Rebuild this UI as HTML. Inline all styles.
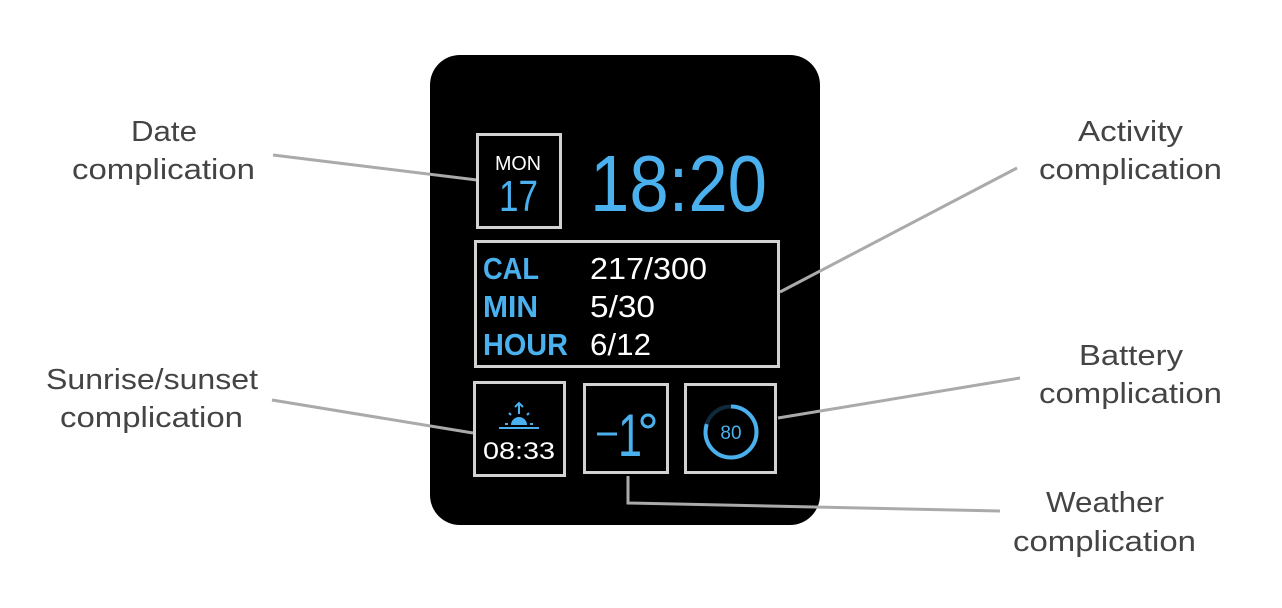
<!DOCTYPE html>
<html><head><meta charset="utf-8"><style>
html,body{margin:0;padding:0;background:#fff;width:1282px;height:608px;overflow:hidden}
svg{display:block}
text{font-family:"Liberation Sans",sans-serif}
</style></head><body>
<svg width="1282" height="608" viewBox="0 0 1282 608" xmlns="http://www.w3.org/2000/svg">
<rect x="430" y="55" width="390" height="470" rx="30" fill="#000"/>
<g stroke="#aaa" stroke-width="3" fill="none">
<line x1="273" y1="155" x2="477" y2="180"/>
<line x1="272" y1="400" x2="473" y2="433"/>
<line x1="780" y1="292" x2="1017" y2="168"/>
<line x1="778" y1="418" x2="1020" y2="378"/>
<polyline points="628,476 628,503 1000,511"/>
</g>
<g stroke="#d2d2d2" stroke-width="3" fill="none">
<rect x="477.5" y="134.5" width="83" height="93"/>
<rect x="475.5" y="241.5" width="303" height="125"/>
<rect x="474.5" y="382.5" width="90" height="93"/>
<rect x="584.5" y="384.5" width="83" height="88"/>
<rect x="685.5" y="384.5" width="90" height="88"/>
</g>
<text x="495" y="170" font-size="20" fill="#fff" textLength="46" lengthAdjust="spacingAndGlyphs">MON</text>
<text x="499" y="211" font-size="44" fill="#4ab0ee" textLength="39" lengthAdjust="spacingAndGlyphs">17</text>
<text x="590" y="211" font-size="80" fill="#4ab0ee" textLength="177" lengthAdjust="spacingAndGlyphs">18:20</text>
<g font-size="31" font-weight="bold" fill="#4ab0ee">
<text x="483" y="279" textLength="56" lengthAdjust="spacingAndGlyphs">CAL</text>
<text x="483" y="317" textLength="55" lengthAdjust="spacingAndGlyphs">MIN</text>
<text x="483" y="355" textLength="85" lengthAdjust="spacingAndGlyphs">HOUR</text>
</g>
<g font-size="31" fill="#fff">
<text x="590" y="279" textLength="117" lengthAdjust="spacingAndGlyphs">217/300</text>
<text x="590" y="317" textLength="65" lengthAdjust="spacingAndGlyphs">5/30</text>
<text x="590" y="355" textLength="61" lengthAdjust="spacingAndGlyphs">6/12</text>
</g>
<g stroke="#4ab0ee" stroke-width="2" fill="none">
<line x1="499" y1="428" x2="539" y2="428"/>
<line x1="519" y1="414" x2="519" y2="403"/>
<polyline points="515,407 519,403 523,407"/>
<line x1="509" y1="413" x2="511" y2="415"/>
<line x1="529" y1="413" x2="527" y2="415"/>
<line x1="505" y1="424" x2="508" y2="424"/>
<line x1="530" y1="424" x2="533" y2="424"/>
</g>
<path d="M511,425 A8,8 0 0 1 527,425 Z" fill="#4ab0ee"/>
<text x="483" y="459" font-size="24" fill="#fff" textLength="72" lengthAdjust="spacingAndGlyphs">08:33</text>
<line x1="597" y1="434" x2="617" y2="434" stroke="#4ab0ee" stroke-width="3"/>
<text x="618" y="456" font-size="60" fill="#4ab0ee" textLength="24" lengthAdjust="spacingAndGlyphs">1</text>
<circle cx="648" cy="421" r="6" stroke="#4ab0ee" stroke-width="3" fill="none"/>
<circle cx="731" cy="432" r="25.5" stroke="#0f2a3c" stroke-width="4" fill="none"/>
<circle cx="731" cy="432" r="25.5" stroke="#4ab0ee" stroke-width="4" fill="none" stroke-dasharray="128 200" transform="rotate(-90 731 432)"/>
<text x="731" y="439" font-size="19" fill="#4ab0ee" text-anchor="middle">80</text>
<g font-size="29" fill="#444">
<text x="131" y="141" textLength="66" lengthAdjust="spacingAndGlyphs">Date</text>
<text x="72" y="179" textLength="183" lengthAdjust="spacingAndGlyphs">complication</text>
<text x="46" y="389" textLength="212" lengthAdjust="spacingAndGlyphs">Sunrise/sunset</text>
<text x="60" y="427" textLength="183" lengthAdjust="spacingAndGlyphs">complication</text>
<text x="1078" y="141" textLength="105" lengthAdjust="spacingAndGlyphs">Activity</text>
<text x="1039" y="179" textLength="183" lengthAdjust="spacingAndGlyphs">complication</text>
<text x="1079" y="365" textLength="104" lengthAdjust="spacingAndGlyphs">Battery</text>
<text x="1039" y="403" textLength="183" lengthAdjust="spacingAndGlyphs">complication</text>
<text x="1046" y="512" textLength="118" lengthAdjust="spacingAndGlyphs">Weather</text>
<text x="1013" y="551" textLength="183" lengthAdjust="spacingAndGlyphs">complication</text>
</g>
</svg>
</body></html>
